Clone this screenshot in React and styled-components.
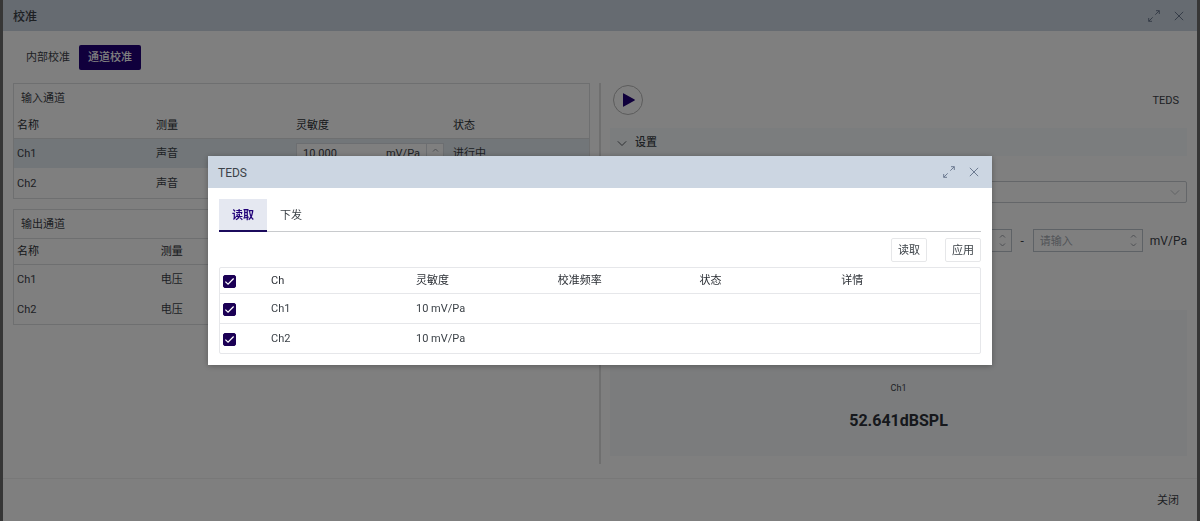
import React from "react";
import styled, { createGlobalStyle, css } from "styled-components";

const Global = createGlobalStyle`
  * { box-sizing: border-box; }
  body {
    margin: 0;
    background: #6c6c6c;
    color: #3c4248;
    font: 11px/16px Roboto, "Noto Sans CJK SC", sans-serif;
  }
  button, input, select { font: inherit; color: inherit; margin: 0; }
  button { cursor: pointer; }
`;

const Window = styled.main`
  display: flex;
  flex-direction: column;
  min-height: 100vh;
  margin: 0 3px;
  background: #fff;
`;

const TitleBar = styled.header`
  display: flex;
  align-items: center;
  gap: 12px;
  height: ${(p) => (p.$modal ? 32 : 31)}px;
  padding: 0 12px 0 10px;
  background: #ccd6e2;
`;

const Title = styled.h1`
  flex: 1;
  margin: 0;
  padding-top: 2px;
  font-size: 12px;
  font-weight: ${(p) => (p.$modal ? 400 : 500)};
`;

const IconButton = styled.button`
  display: grid;
  place-items: center;
  width: 13px;
  height: 16px;
  padding: 0;
  border: 0;
  background: none;
  color: #6c7a90;
`;

const Body = styled.div`
  flex: 1;
  display: flex;
  flex-direction: column;
  padding: 14px 10px;
`;

const ModeTabs = styled.nav`
  display: flex;
  padding-left: 4px;
`;

const ModeTab = styled.button`
  height: 25px;
  padding: 1px 9px 0;
  border: 0;
  border-radius: 2px;
  background: none;
  ${(p) => p.$active && css`
    background: #200078;
    color: #fff;
    font-weight: 500;
  `}
`;

const Columns = styled.div`
  flex: 1;
  display: grid;
  grid-template-columns: minmax(0, 1fr) 20px minmax(0, 1fr);
  padding-top: 13px;
`;

const Divider = styled.div`
  justify-self: center;
  width: 2px;
  background: #dedede;
`;

const Stack = styled.div`
  display: flex;
  flex-direction: column;
  gap: ${(p) => p.$gap || 0}px;
`;

const Panel = styled.section`
  border: 1px solid #dcdee0;
`;

const PanelTitle = styled.h2`
  margin: 0;
  padding: 7px 7px 5px;
  font-size: 11px;
  font-weight: 400;
  ${(p) => p.$lined && css`border-bottom: 1px solid #dcdee0;`}
`;

const Table = styled.table`
  width: 100%;
  table-layout: fixed;
  border-collapse: collapse;
  th, td {
    padding: 2px 3px 0;
    text-align: left;
    white-space: nowrap;
  }
  th {
    height: ${(p) => (p.$compact ? 25 : 26)}px;
    color: #2c3036;
    font-weight: 400;
    border-bottom: 1px solid #dcdee0;
  }
  td { height: 30px; }
`;

const Row = styled.tr`
  background: ${(p) => (p.$selected ? "#e5edf3" : "none")};
`;

const NumberBox = styled.span`
  display: flex;
  align-items: center;
  width: ${(p) => p.$width || 148}px;
  height: 23px;
  border: 1px solid ${(p) => (p.$strong ? "#bcc4cc" : "#d8dde2")};
  background: #fff;
  input {
    flex: 1;
    min-width: 0;
    padding: 0 6px;
    border: 0;
    outline: 0;
    background: none;
  }
  input::placeholder { color: #a4a9b0; font-size: 11px; opacity: 1; }
`;

const Stepper = styled.span`
  display: grid;
  place-items: center;
  width: 17px;
  height: 100%;
  margin-left: 6px;
  color: #9aa0a8;
  border-left: ${(p) => (p.$lined ? "1px solid #d8dde2" : "0")};
`;

const Toolbar = styled.div`
  display: flex;
  align-items: center;
  justify-content: space-between;
  height: 33px;
  padding: 0 0 0 3px;
`;

const PlayButton = styled.button`
  display: grid;
  place-items: center;
  width: 30px;
  height: 30px;
  padding: 0;
  border: 1px solid #b8b8b8;
  border-radius: 50%;
  background: none;
  color: #200078;
`;

const TextButton = styled.button`
  height: ${(p) => (p.$framed ? 24 : 26)}px;
  padding: ${(p) => (p.$framed ? "1px 6px 0" : "2px 7px 0")};
  border: 1px solid ${(p) => (p.$framed ? "#e6e7e9" : "transparent")};
  border-radius: 2px;
  background: none;
`;

const SectionBar = styled.button`
  display: flex;
  align-items: center;
  gap: 8px;
  height: 28px;
  margin-top: 12px;
  padding: 2px 7px 0;
  border: 0;
  background: #f6fafc;
  font-weight: 500;
`;

const SelectBox = styled.label`
  display: flex;
  align-items: center;
  height: 22px;
  margin: 25px 0 0 80px;
  padding-right: 6px;
  border: 1px solid #c8cdd2;
  border-radius: 2px;
  color: #b4b9c0;
  select {
    flex: 1;
    appearance: none;
    border: 0;
    background: none;
  }
`;

const RangeRow = styled.div`
  display: flex;
  align-items: center;
  justify-content: flex-end;
  gap: 7px;
  margin-top: 26px;
  font-size: 12px;
`;

const Dash = styled.span`
  padding: 0 2px;
`;

const Result = styled.section`
  display: flex;
  flex-direction: column;
  align-items: center;
  gap: 16px;
  height: 146px;
  margin-top: 58px;
  padding-top: 71px;
  background: #f6f9fa;
`;

const ResultName = styled.span`
  font-size: 9px;
  line-height: 14px;
`;

const ResultValue = styled.strong`
  font-size: 16px;
  line-height: 20px;
  color: #2c3038;
`;

const Footer = styled.footer`
  display: flex;
  align-items: center;
  justify-content: flex-end;
  height: 43px;
  padding: 0 10px;
  border-top: 1px solid #f0f0f0;
`;

const Mask = styled.div`
  position: fixed;
  inset: 0;
  padding-top: 156px;
  background: rgba(0, 0, 0, 0.5);
`;

const Dialog = styled.section`
  max-width: 784px;
  margin: 0 auto;
  background: #fff;
  box-shadow: 0 1px 6px rgba(0, 0, 0, 0.3);
`;

const DialogBody = styled.div`
  padding: 11px;
`;

const DialogTabs = styled.nav`
  display: flex;
  border-bottom: 1px solid #c8cacd;
`;

const DialogTab = styled.button`
  height: 33px;
  margin-bottom: -1px;
  padding: 2px 13px 0;
  border: 0;
  border-bottom: 2px solid transparent;
  background: none;
  ${(p) => p.$active && css`
    border-color: #1b0a5c;
    background: #e5e8f1;
    color: #200078;
    font-weight: 700;
  `}
`;

const Actions = styled.div`
  display: flex;
  justify-content: flex-end;
  gap: 18px;
  padding: 6px 0 5px;
`;

const TedsPanel = styled.div`
  border: 1px solid #e6e7ea;
  border-radius: 2px;
  th, td { border-bottom: 1px solid #e6e7ea; }
  tr:last-child td { border-bottom: 0; }
`;

const Check = styled.input`
  display: block;
  appearance: none;
  width: 13px;
  height: 13px;
  margin: 0;
  border: 1px solid #9aa0b0;
  border-radius: 2px;
  &:checked {
    border-color: #1b0055;
    background: #1b0055 url("data:image/svg+xml,%3Csvg xmlns='http://www.w3.org/2000/svg' viewBox='0 0 12 12'%3E%3Cpath d='M1.5 6.2 4.4 9 10.5 2.7' fill='none' stroke='white' stroke-width='1.3'/%3E%3C/svg%3E") center / 11px 11px no-repeat;
  }
`;

const Svg = ({ size = 12, children }) => (
  <svg width={size} height={size} viewBox="0 0 12 12" fill="none" stroke="currentColor" aria-hidden="true">
    {children}
  </svg>
);

const WindowControls = () => (
  <>
    <IconButton aria-label="最大化">
      <Svg><path d="M7.3 4.7 11.3.7M8 .7h3.3V4M4.7 7.3.7 11.3M.7 8v3.3H4" /></Svg>
    </IconButton>
    <IconButton aria-label="关闭窗口">
      <Svg size={10}><path d="M1 1 11 11M11 1 1 11" strokeWidth="1.2" /></Svg>
    </IconButton>
  </>
);

const Chevron = () => <Svg size={10}><path d="M1 4 6 9 11 4" /></Svg>;

const Arrows = () => (
  <svg width="7" height="13" viewBox="0 0 7 13" fill="none" stroke="currentColor" aria-hidden="true">
    <path d="M1 3.5 3.5 1 6 3.5M1 9.5 3.5 12 6 9.5" />
  </svg>
);

const Sensitivity = ({ name }) => (
  <NumberBox>
    <input aria-label={`${name} 灵敏度`} defaultValue="10.000" />
    <span>mV/Pa</span>
    <Stepper $lined><Arrows /></Stepper>
  </NumberBox>
);

const inputChannels = [
  { name: "Ch1", status: "进行中", selected: true },
  { name: "Ch2", status: "" },
];
const channels = ["Ch1", "Ch2"];

function InputPanel() {
  return (
    <Panel>
      <PanelTitle>输入通道</PanelTitle>
      <Table>
        <colgroup><col width="139" /><col width="140" /><col width="157" /><col /></colgroup>
        <thead><tr><th>名称</th><th>测量</th><th>灵敏度</th><th>状态</th></tr></thead>
        <tbody>
          {inputChannels.map((c) => (
            <Row key={c.name} $selected={c.selected}>
              <td>{c.name}</td><td>声音</td><td><Sensitivity name={c.name} /></td><td>{c.status}</td>
            </Row>
          ))}
        </tbody>
      </Table>
    </Panel>
  );
}

function OutputPanel() {
  return (
    <Panel>
      <PanelTitle $lined>输出通道</PanelTitle>
      <Table $compact>
        <thead><tr><th>名称</th><th>测量</th><th /><th /></tr></thead>
        <tbody>
          {channels.map((c) => <Row key={c}><td>{c}</td><td>电压</td><td /><td /></Row>)}
        </tbody>
      </Table>
    </Panel>
  );
}

function Settings() {
  return (
    <Stack>
      <Toolbar>
        <PlayButton aria-label="开始">
          <svg width="14" height="14" viewBox="0 0 14 14" fill="currentColor" aria-hidden="true">
            <path d="M2 .8v12.4a.5.5 0 0 0 .8.4L13.6 7.4a.5.5 0 0 0 0-.8L2.8.4A.5.5 0 0 0 2 .8Z" />
          </svg>
        </PlayButton>
        <TextButton>TEDS</TextButton>
      </Toolbar>
      <SectionBar><Chevron />设置</SectionBar>
      <SelectBox><select aria-label="设置" /><Chevron /></SelectBox>
      <RangeRow>
        <NumberBox $width={110} $strong><input aria-label="下限" /><Stepper><Arrows /></Stepper></NumberBox>
        <Dash>-</Dash>
        <NumberBox $width={110} $strong>
          <input aria-label="上限" placeholder="请输入" /><Stepper><Arrows /></Stepper>
        </NumberBox>
        <span>mV/Pa</span>
      </RangeRow>
      <Result>
        <ResultName>Ch1</ResultName>
        <ResultValue>52.641dBSPL</ResultValue>
      </Result>
    </Stack>
  );
}

function TedsDialog() {
  return (
    <Mask>
      <Dialog role="dialog" aria-label="TEDS">
        <TitleBar $modal><Title as="h2" $modal>TEDS</Title><WindowControls /></TitleBar>
        <DialogBody>
          <DialogTabs><DialogTab $active>读取</DialogTab><DialogTab>下发</DialogTab></DialogTabs>
          <Actions><TextButton $framed>读取</TextButton><TextButton $framed>应用</TextButton></Actions>
          <TedsPanel>
            <Table $compact>
              <colgroup><col width="48" /><col width="145" /><col /><col /><col /><col /></colgroup>
              <thead>
                <tr>
                  <th><Check type="checkbox" aria-label="全选" defaultChecked /></th>
                  <th>Ch</th><th>灵敏度</th><th>校准频率</th><th>状态</th><th>详情</th>
                </tr>
              </thead>
              <tbody>
                {channels.map((c) => (
                  <tr key={c}>
                    <td><Check type="checkbox" aria-label={c} defaultChecked /></td>
                    <td>{c}</td><td>10 mV/Pa</td><td /><td /><td />
                  </tr>
                ))}
              </tbody>
            </Table>
          </TedsPanel>
        </DialogBody>
      </Dialog>
    </Mask>
  );
}

export default function App() {
  return (
    <>
      <Global />
      <Window>
        <TitleBar><Title>校准</Title><WindowControls /></TitleBar>
        <Body>
          <ModeTabs><ModeTab>内部校准</ModeTab><ModeTab $active>通道校准</ModeTab></ModeTabs>
          <Columns>
            <Stack $gap={10}><InputPanel /><OutputPanel /></Stack>
            <Divider />
            <Settings />
          </Columns>
        </Body>
        <Footer><TextButton>关闭</TextButton></Footer>
      </Window>
      <TedsDialog />
    </>
  );
}
